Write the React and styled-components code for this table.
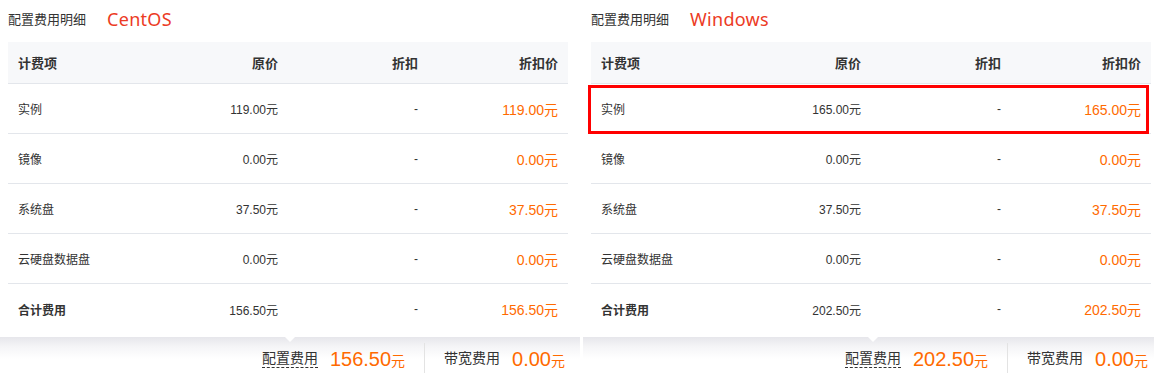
import React from 'react'
import styled, { createGlobalStyle } from 'styled-components'

const Global = createGlobalStyle`
html, body {
  margin: 0;
  padding: 0;
  background: #fff;
  overflow: hidden;
}
body {
  font-family: "Liberation Sans", "Noto Sans CJK SC", sans-serif;
  color: #333;
}
`

const Page = styled.div`
display: flex;
width: 1170px;
`

const Panel = styled.div`
width: 580px;
flex: none;
margin-right: 3px;
display: flex;
flex-direction: column;
`

const Head = styled.div`
height: 42px;
display: flex;
align-items: center;
padding: 0 8px 5px;
box-sizing: border-box;
`

const HeadTitle = styled.span`
font-size: 13px;
color: #333;
font-family: "Noto Sans CJK SC", sans-serif;
`

const OsName = styled.span`
margin-left: 21px;
font-size: 18px;
color: #ec3b25;
font-family: "Noto Sans", "Open Sans", sans-serif;
letter-spacing: 0.3px;
`

const Table = styled.div`
width: 560px;
margin-left: 8px;
`

const Row = styled.div`
display: grid;
grid-template-columns: repeat(4, 140px);
height: ${p => (p.$head ? '42px' : '50px')};
align-items: center;
background: ${p => (p.$head ? '#f7f8fa' : '#fff')};
border-bottom: ${p => (p.$last ? 'none' : '1px solid #e3e6eb')};
box-sizing: border-box;
position: relative;
`

const MarkBox = styled.div`
position: absolute;
left: -3px;
right: 2px;
top: 1px;
bottom: -1px;
border: 3px solid #f00;
pointer-events: none;
`

const Cell = styled.div`
padding: 0 10px;
text-align: ${p => (p.$left ? 'left' : 'right')};
font-size: ${p => (p.$price ? '14px' : '12px')};
color: ${p => (p.$price ? '#ff6a00' : '#333')};
font-weight: ${p => (p.$bold ? 'bold' : 'normal')};
font-family: "Liberation Sans", "Noto Sans CJK SC", sans-serif;
white-space: nowrap;
`

const HeadCell = styled(Cell)`
font-size: 13px;
font-weight: bold;
color: #333;
font-family: "Noto Sans CJK SC", sans-serif;
`

const Footer = styled.div`
margin-top: 3px;
height: 45px;
background: linear-gradient(#e6e6eb, #f5f5f7 10px, #fff 22px);
display: flex;
align-items: center;
justify-content: flex-end;
padding-right: 15px;
padding-bottom: 4px;
box-sizing: border-box;
`

const FeeGroup = styled.div`
display: flex;
align-items: center;
padding: 0 ${p => (p.$first ? '19px' : '0')} 0 ${p => (p.$first ? '0' : '19px')};
border-right: ${p => (p.$first ? '1px solid #e3e3e3' : 'none')};
height: 30px;
`

const FeeLabel = styled.span`
position: relative;
font-size: 14px;
color: #333;
font-family: "Noto Sans CJK SC", sans-serif;
border-bottom: ${p => (p.$dashed ? '1px dashed #333' : 'none')};
line-height: 19px;
margin-right: 12px;
`

const Arrow = styled.i`
position: absolute;
left: 50%;
top: -12px;
margin-left: -6px;
width: 0;
height: 0;
border-left: 6px solid transparent;
border-right: 6px solid transparent;
border-top: 6px solid #fff;
`

const FeeValue = styled.span`
font-size: 20px;
color: #ff6a00;
font-family: "Liberation Sans", sans-serif;
display: flex;
align-items: baseline;
margin-top: 3px;
`

const Yuan = styled.span`
font-size: 14px;
font-family: "Noto Sans CJK SC", sans-serif;
`

const panels = [
  {
    os: 'CentOS',
    rows: [
      ['实例', '119.00元', '119.00元'],
      ['镜像', '0.00元', '0.00元'],
      ['系统盘', '37.50元', '37.50元'],
      ['云硬盘数据盘', '0.00元', '0.00元'],
    ],
    total: '156.50',
    mark: false,
  },
  {
    os: 'Windows',
    rows: [
      ['实例', '165.00元', '165.00元'],
      ['镜像', '0.00元', '0.00元'],
      ['系统盘', '37.50元', '37.50元'],
      ['云硬盘数据盘', '0.00元', '0.00元'],
    ],
    total: '202.50',
    mark: true,
  },
]

const FeePanel = ({ data }) => (
  <Panel>
    <Head>
      <HeadTitle>配置费用明细</HeadTitle>
      <OsName>{data.os}</OsName>
    </Head>
    <Table>
      <Row $head>
        <HeadCell $left>计费项</HeadCell>
        <HeadCell>原价</HeadCell>
        <HeadCell>折扣</HeadCell>
        <HeadCell>折扣价</HeadCell>
      </Row>
      {data.rows.map((r, i) => (
        <Row key={i}>
          <Cell $left>{r[0]}</Cell>
          <Cell>{r[1]}</Cell>
          <Cell>-</Cell>
          <Cell $price>{r[2]}</Cell>
          {data.mark && i === 0 && <MarkBox />}
        </Row>
      ))}
      <Row $last>
        <Cell $left $bold>合计费用</Cell>
        <Cell>{data.total}元</Cell>
        <Cell>-</Cell>
        <Cell $price>{data.total}元</Cell>
      </Row>
    </Table>
    <Footer>
      <FeeGroup $first>
        <FeeLabel $dashed>
          <Arrow />
          配置费用
        </FeeLabel>
        <FeeValue>
          {data.total}
          <Yuan>元</Yuan>
        </FeeValue>
      </FeeGroup>
      <FeeGroup>
        <FeeLabel>带宽费用</FeeLabel>
        <FeeValue>
          0.00
          <Yuan>元</Yuan>
        </FeeValue>
      </FeeGroup>
    </Footer>
  </Panel>
)

const App = () => (
  <>
    <Global />
    <Page>
      {panels.map(p => (
        <FeePanel key={p.os} data={p} />
      ))}
    </Page>
  </>
)

export default App
